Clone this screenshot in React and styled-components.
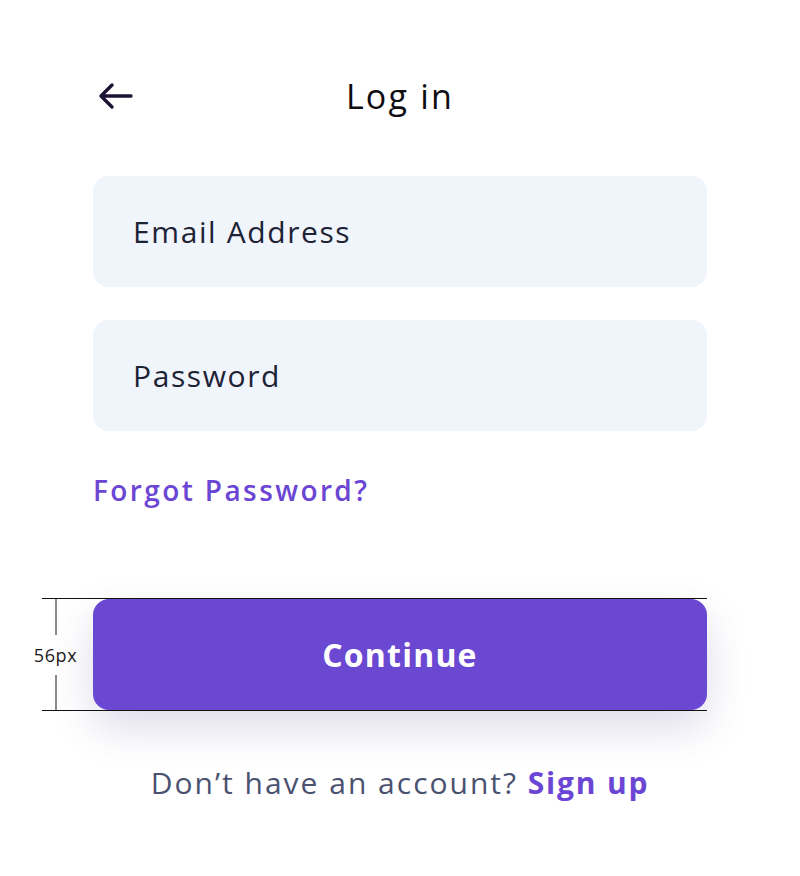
import React from 'react';
import styled, { createGlobalStyle } from 'styled-components';

const Global = createGlobalStyle`
  html, body { margin: 0; padding: 0; background: #ffffff; }
  body { font-family: "Open Sans", "DejaVu Sans", sans-serif; }
`;

const Page = styled.div`
  width: 800px;
  min-height: 876px;
  box-sizing: border-box;
  padding: 60px 93px 0;
  display: flex;
  flex-direction: column;
`;

const Header = styled.div`
  position: relative;
  height: 72px;
  display: flex;
  align-items: center;
  justify-content: center;
  margin-bottom: 44px;
`;

const BackButton = styled.button`
  position: absolute;
  left: 4px;
  top: 50%;
  transform: translateY(-50%);
  border: none;
  background: none;
  padding: 0;
  width: 40px;
  height: 40px;
  display: flex;
  align-items: center;
  cursor: pointer;
`;

const Title = styled.h1`
  margin: 0;
  font-size: 34px;
  font-weight: 500;
  color: #0d0d12;
  letter-spacing: 2.2px;
`;

const Field = styled.div`
  height: 111px;
  border-radius: 16px;
  background: #f0f4fb;
  display: flex;
  align-items: center;
  padding: 0 40px;
  margin-bottom: ${p => p.$gap}px;
  font-size: 30px;
  color: #1e2235;
  letter-spacing: 1.6px;
`;

const Forgot = styled.a`
  display: block;
  font-size: 28px;
  line-height: 38px;
  font-weight: 600;
  color: #6b46d4;
  letter-spacing: 2.4px;
  margin-bottom: 90px;
`;

const ButtonWrap = styled.div`
  position: relative;
`;

const Button = styled.button`
  width: 100%;
  height: 111px;
  border: none;
  border-radius: 16px;
  background: #6b48d2;
  color: #ffffff;
  font-family: inherit;
  font-size: 32px;
  font-weight: 700;
  letter-spacing: 1.2px;
  box-shadow: 0 18px 40px rgba(70, 55, 140, 0.18);
  display: block;
`;

const Rule = styled.div`
  position: absolute;
  left: -51px;
  right: 0;
  height: 1px;
  background: #111111;
  ${p => (p.$bottom ? 'bottom: -1px;' : 'top: -1px;')}
`;

const Tick = styled.div`
  position: absolute;
  left: -38px;
  top: 0;
  bottom: 0;
  width: 1px;
  display: flex;
  flex-direction: column;
  align-items: center;
`;

const TickLine = styled.div`
  flex: 1;
  width: 2px;
  background: #8a8a8a;
`;

const TickLabel = styled.span`
  font-size: 18px;
  color: #1a1a1a;
  padding: 8px 0;
  white-space: nowrap;
  letter-spacing: 0.6px;
`;

const Footer = styled.p`
  margin: 53px 0 0;
  line-height: 40px;
  text-align: center;
  font-size: 30px;
  color: #4a5270;
  letter-spacing: 2px;
`;

const SignUp = styled.a`
  color: #6b46d4;
  font-weight: 700;
  letter-spacing: 1.8px;
`;

export default function App() {
  return (
    <>
      <Global />
      <Page>
        <Header>
          <BackButton aria-label="Back">
            <svg width="38" height="30" viewBox="0 0 38 30" fill="none">
              <path
                d="M34 15H4M15 4L4 15l11 11"
                stroke="#1e1236"
                strokeWidth="3.4"
                strokeLinecap="round"
                strokeLinejoin="round"
              />
            </svg>
          </BackButton>
          <Title>Log in</Title>
        </Header>
        <Field $gap={33}>Email Address</Field>
        <Field $gap={40}>Password</Field>
        <Forgot>Forgot Password?</Forgot>
        <ButtonWrap>
          <Rule />
          <Rule $bottom />
          <Tick>
            <TickLine />
            <TickLabel>56px</TickLabel>
            <TickLine />
          </Tick>
          <Button>Continue</Button>
        </ButtonWrap>
        <Footer>
          Don’t have an account? <SignUp>Sign up</SignUp>
        </Footer>
      </Page>
    </>
  );
}
